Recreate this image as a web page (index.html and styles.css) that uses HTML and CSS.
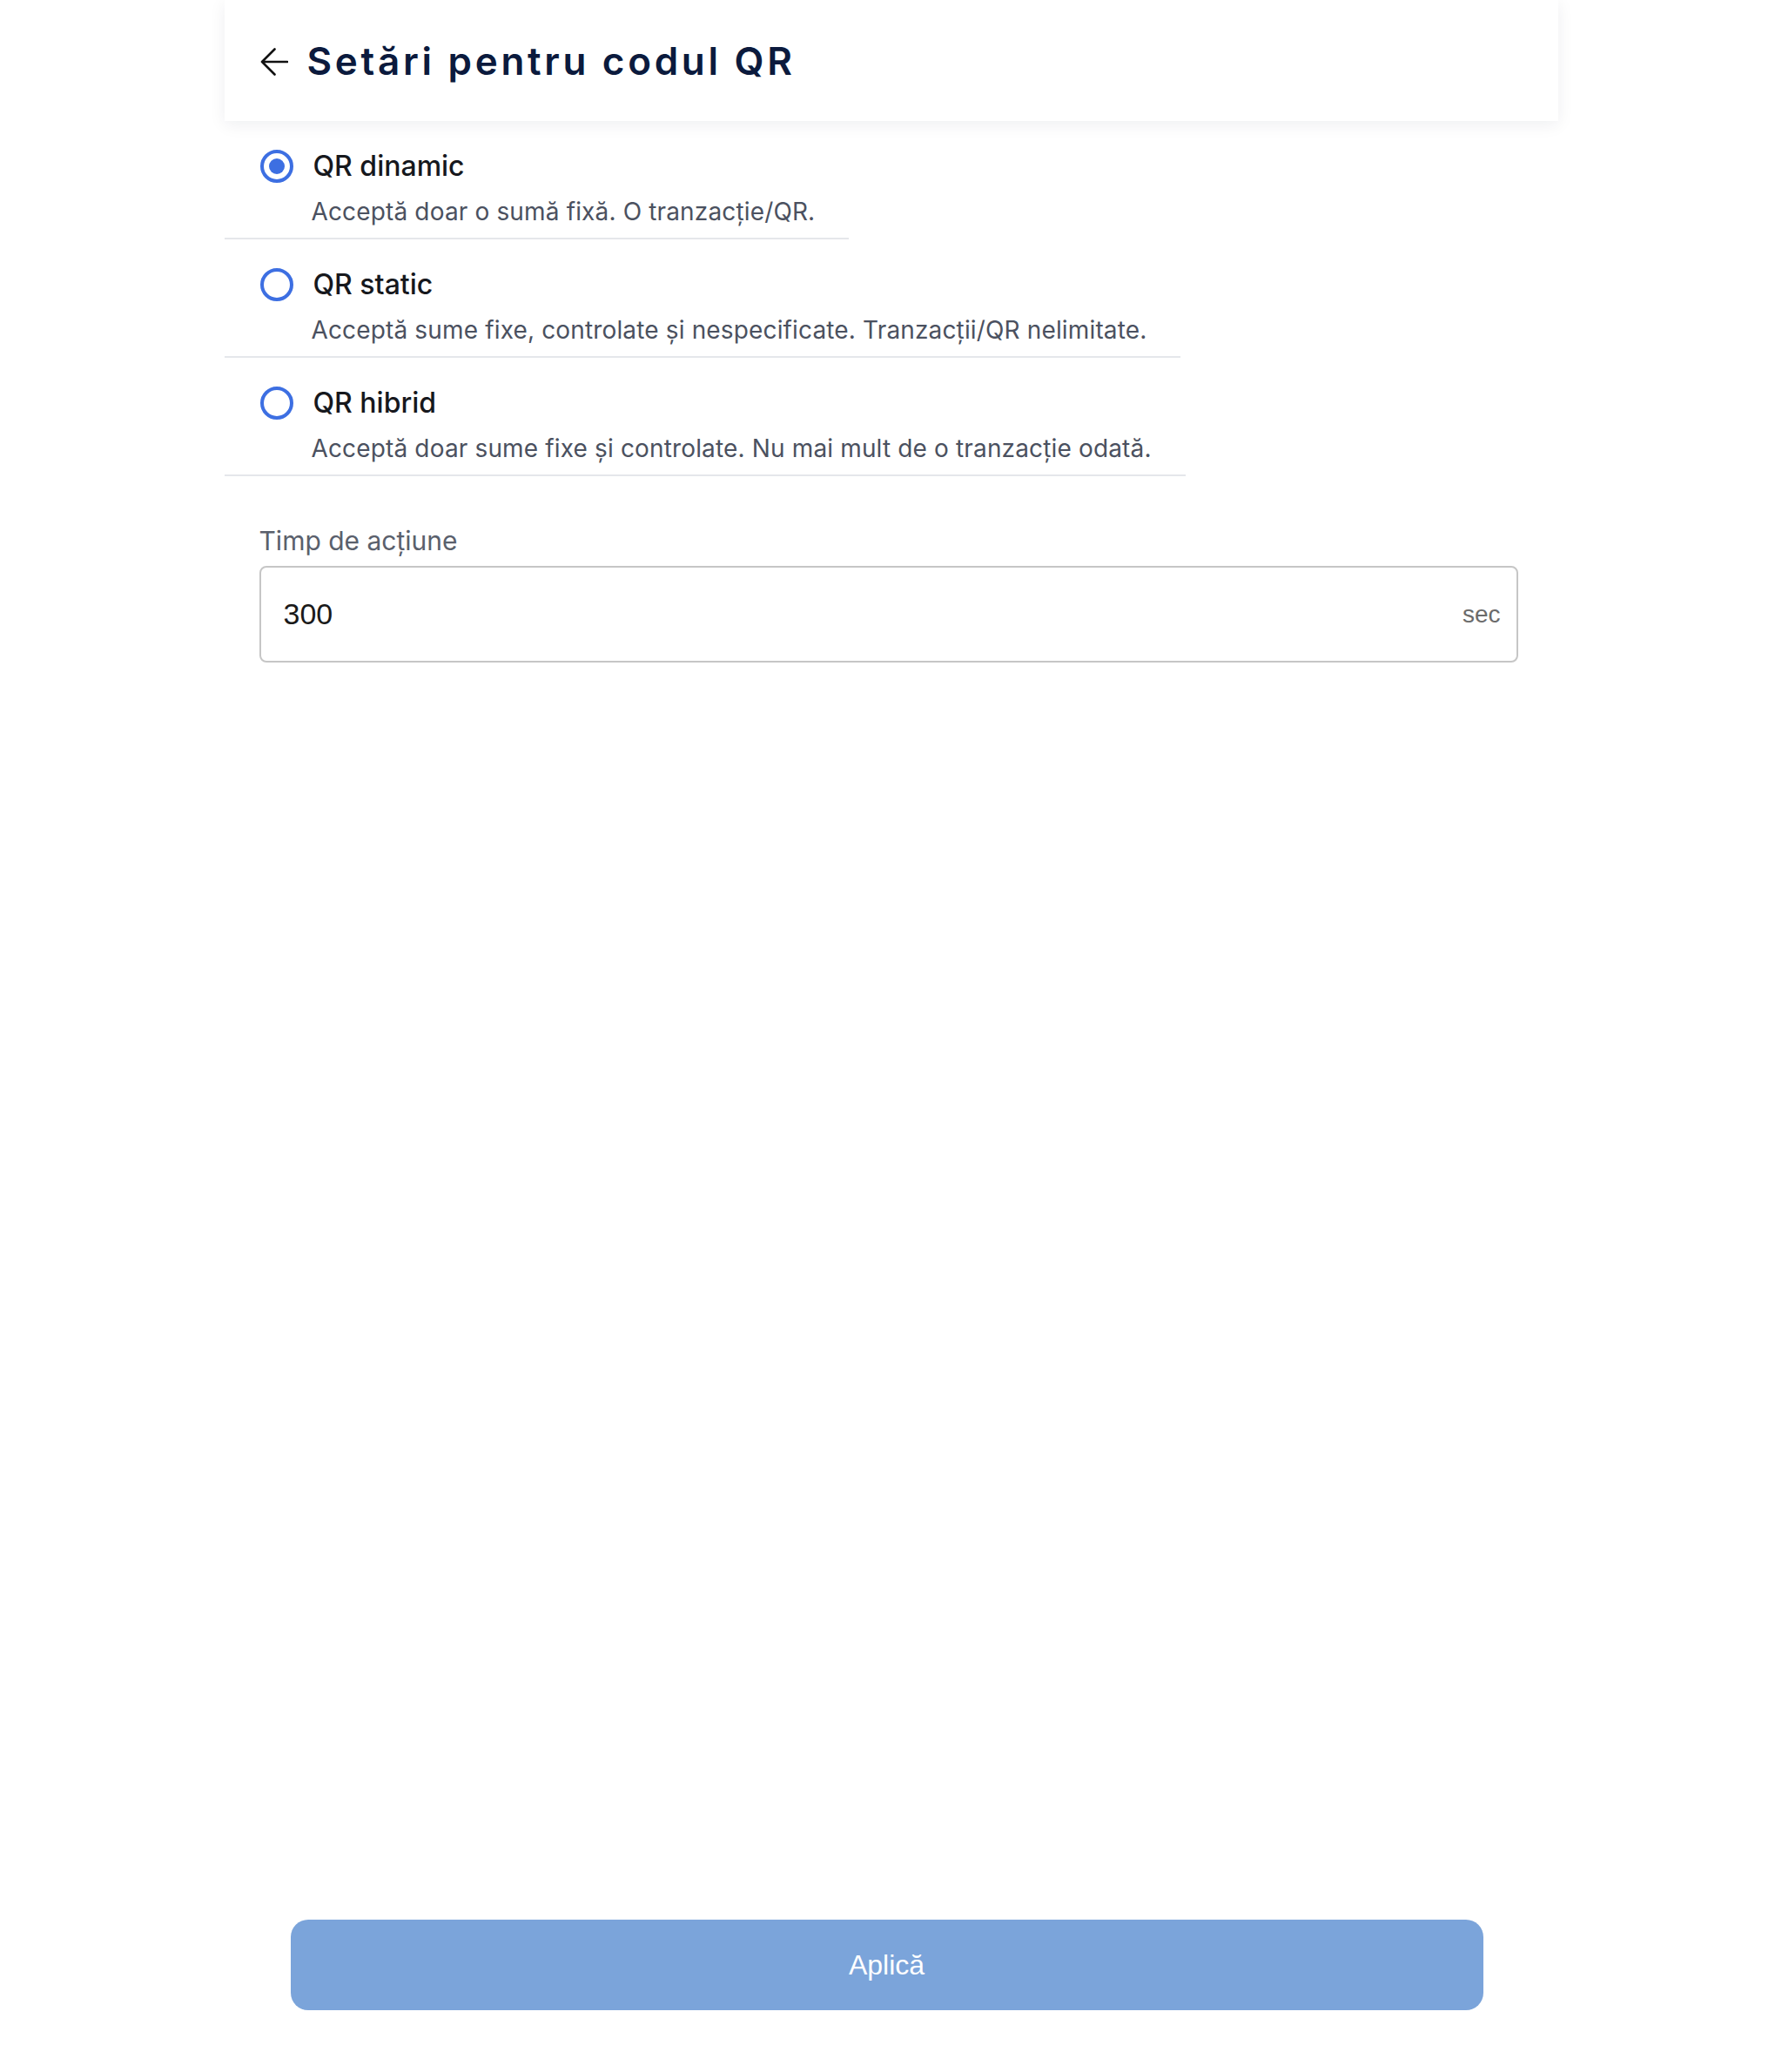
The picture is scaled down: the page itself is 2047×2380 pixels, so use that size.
FILE: index.html
```html
<!DOCTYPE html>
<html lang="ro">
<head>
<meta charset="utf-8">
<title>Setări pentru codul QR</title>
<link rel="stylesheet" href="styles.css">
</head>
<body>
<div class="page">
  <header class="header">
    <svg class="back" width="32" height="32" viewBox="0 0 32 32" aria-hidden="true">
      <path d="M2 16 H31 M16.5 1.5 L2 16 L16.5 30.5" fill="none" stroke="#111" stroke-width="2.6" stroke-linecap="round" stroke-linejoin="round"/>
    </svg>
    <h1 class="title">Setări pentru codul QR</h1>
  </header>

  <div class="options">
    <div class="option">
      <span class="radio checked"></span>
      <span class="opt-label">QR dinamic</span>
      <span class="opt-desc">Acceptă doar o sumă fixă. O tranzacție/QR.</span>
    </div>
    <div class="option">
      <span class="radio"></span>
      <span class="opt-label">QR static</span>
      <span class="opt-desc">Acceptă sume fixe, controlate și nespecificate. Tranzacții/QR nelimitate.</span>
    </div>
    <div class="option">
      <span class="radio"></span>
      <span class="opt-label">QR hibrid</span>
      <span class="opt-desc">Acceptă doar sume fixe și controlate. Nu mai mult de o tranzacție odată.</span>
    </div>
  </div>

  <div class="field">
    <div class="field-label">Timp de acțiune</div>
    <div class="input">
      <span class="value">300</span>
      <span class="suffix">sec</span>
    </div>
  </div>

  <div class="footer">
    <button class="apply">Aplică</button>
  </div>
</div>
</body>
</html>
```

FILE: styles.css
```css
* { box-sizing: border-box; }

html, body {
  margin: 0;
  padding: 0;
  background: #ffffff;
}

body {
  font-family: Inter, "Noto Sans", sans-serif;
}

.page {
  width: 1532px;
  margin: 0 auto;
  min-height: 2380px;
  display: flex;
  flex-direction: column;
}

.header {
  height: 139px;
  background: #fff;
  display: flex;
  align-items: center;
  padding-left: 41px;
  gap: 22px;
  box-shadow: 0 4px 18px rgba(20, 30, 60, 0.07);
  position: relative;
  z-index: 1;
}

.back {
  display: block;
  flex: none;
  margin-top: 2px;
}

.title {
  margin: 0;
  font-size: 44px;
  font-weight: 600;
  color: #0b1a3d;
  letter-spacing: 3.7px;
  line-height: 50px;
}

.options {
  display: flex;
  flex-direction: column;
  align-items: flex-start;
}

.option {
  display: grid;
  grid-template-columns: 38px auto;
  column-gap: 21px;
  align-items: center;
  padding: 32px 39px 12px 41px;
  border-bottom: 2px solid #e5e7eb;
}

.radio {
  width: 38px;
  height: 38px;
  border: 4px solid #3d6fe2;
  border-radius: 50%;
  display: flex;
  align-items: center;
  justify-content: center;
}

.radio.checked::after {
  content: "";
  width: 18px;
  height: 18px;
  border-radius: 50%;
  background: #3d6fe2;
}

.opt-label {
  font-size: 32px;
  font-weight: 500;
  line-height: 40px;
  color: #16181d;
  padding-left: 2px;
}

.opt-desc {
  grid-column: 2;
  font-size: 28px;
  line-height: 36px;
  letter-spacing: 0.15px;
  margin-top: 14px;
  color: #4b5160;
}

.field {
  margin: 56px 46px 0 40px;
}

.field-label {
  font-size: 30px;
  line-height: 36px;
  color: #5a606c;
  margin-bottom: 11px;
}

.input {
  height: 111px;
  border: 2px solid #c6c6c6;
  border-radius: 8px;
  display: flex;
  align-items: center;
  justify-content: space-between;
  padding: 0 18px 0 26px;
  font-family: "Liberation Sans", Arial, sans-serif;
}

.value {
  font-size: 34px;
  color: #1a1a1a;
}

.suffix {
  font-size: 28px;
  color: #6b6b6b;
}

.footer {
  margin-top: auto;
  padding: 0 0 71px 76px;
}

.apply {
  display: block;
  width: 1370px;
  height: 104px;
  border: none;
  border-radius: 20px;
  background: #7ba4da;
  color: #ffffff;
  font-family: "Liberation Sans", Arial, sans-serif;
  font-size: 32px;
  cursor: pointer;
}
```
